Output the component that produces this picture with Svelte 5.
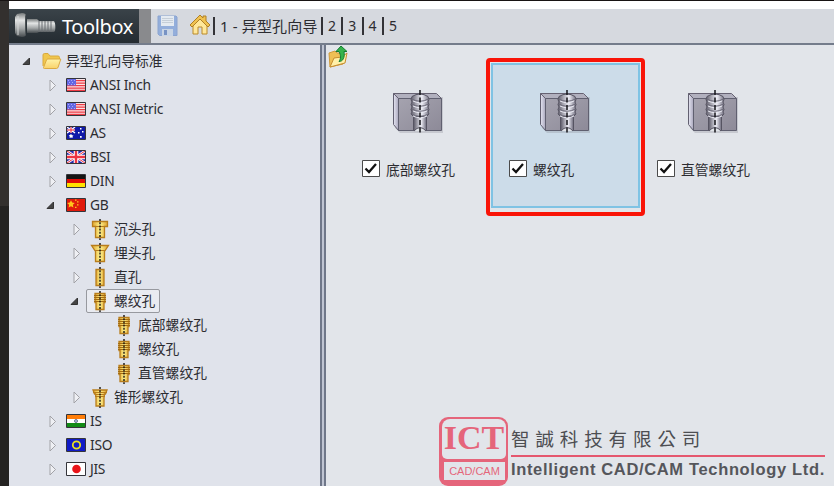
<script>
	const tabs = ['1 - 异型孔向导', '2', '3', '4', '5'];

	const tree = [
		{ label: '异型孔向导标准', icon: 'folder', level: 0, state: 'open' },
		{ label: 'ANSI Inch', icon: 'us', level: 1, state: 'closed' },
		{ label: 'ANSI Metric', icon: 'us', level: 1, state: 'closed' },
		{ label: 'AS', icon: 'au', level: 1, state: 'closed' },
		{ label: 'BSI', icon: 'gb', level: 1, state: 'closed' },
		{ label: 'DIN', icon: 'de', level: 1, state: 'closed' },
		{ label: 'GB', icon: 'cn', level: 1, state: 'open' },
		{ label: '沉头孔', icon: 'counterbore', level: 2, state: 'closed' },
		{ label: '埋头孔', icon: 'countersink', level: 2, state: 'closed' },
		{ label: '直孔', icon: 'straight', level: 2, state: 'closed' },
		{ label: '螺纹孔', icon: 'tapped', level: 2, state: 'open', selected: true },
		{ label: '底部螺纹孔', icon: 'tapped', level: 3 },
		{ label: '螺纹孔', icon: 'tapped', level: 3 },
		{ label: '直管螺纹孔', icon: 'tapped', level: 3 },
		{ label: '锥形螺纹孔', icon: 'tapered', level: 2, state: 'closed' },
		{ label: 'IS', icon: 'in', level: 1, state: 'closed' },
		{ label: 'ISO', icon: 'iso', level: 1, state: 'closed' },
		{ label: 'JIS', icon: 'jp', level: 1, state: 'closed' }
	];

	const holePaths = {
		counterbore: 'M2.5 2.5h15v5h-3v11h-9v-11h-3z',
		countersink: 'M1.5 2.5h17l-4 6v10h-9v-10z',
		straight: 'M6 2.5h8v16H6z',
		tapped: 'M5 2.5h10v9h-1v7H6v-7H5z',
		tapered: 'M3 3h14l-1.5 4h-1l-.5 4v8H6v-8l-.5-4h-1z'
	};

	let items = $state([
		{ label: '底部螺纹孔', checked: true },
		{ label: '螺纹孔', checked: true, selected: true },
		{ label: '直管螺纹孔', checked: true }
	]);
</script>

{#snippet flag(code)}
	<svg class="icon" width="20" height="16" viewBox="0 0 20 16">
		{#if code === 'us'}
			<path fill="#fbe3e6" d="M1 2h18v12H1z" />
			<path fill="#ee3b44" d="M1 3h18v1.3H1zM1 5.5h18v1.3H1zM1 8h18v1.3H1zM1 10.5h18v1.3H1zM1 12.8h18V14H1z" />
			<path fill="#6467e4" d="M1 2h9v6.5H1z" />
			<path fill="#a9abf5" d="M2 3h1v1H2zM5 3h1v1H5zM8 3h1v1H8zM3 5h1v1H3zM6 5h1v1H6zM2 7h1v1H2zM5 7h1v1H5zM8 7h1v1H8z" />
		{:else if code === 'au'}
			<path fill="#1019a8" d="M1 2h18v12H1z" />
			<path stroke="#fff" stroke-width="1.5" d="M1 2l8 6M9 2L1 8M5 2v6M1 5h8" />
			<path stroke="#ed2939" d="M1 5h8M5 2v6" />
			<path fill="#fff" d="M5 9l1 1.3 1.5.2-1 1.2.1 1.3L5 12.6l-1.4.4.1-1.4-1-1.1L4 10zM14 3h1.5v1.5H14zM12 7h1.5v1.5H12zM16 6h1.5v1.5H16zM14 11h1.7v1.7H14z" />
		{:else if code === 'gb'}
			<path fill="#252aaa" d="M1 2h18v12H1z" />
			<path stroke="#fff" stroke-width="2.6" d="M1 2l18 12M19 2L1 14" />
			<path stroke="#ed2939" d="M1 2l18 12M19 2L1 14" />
			<path stroke="#fff" stroke-width="4.6" d="M10 2v12M1 8h18" />
			<path stroke="#ee3442" stroke-width="2.4" d="M10 2v12M1 8h18" />
		{:else if code === 'de'}
			<path fill="#151515" d="M1 2h18v4H1z" />
			<path fill="#e00b05" d="M1 6h18v4H1z" />
			<path fill="#ffe100" d="M1 10h18v4H1z" />
		{:else if code === 'cn'}
			<path fill="#e01a0c" d="M1 2h18v12H1z" />
			<path fill="#ffc41c" d="M5 3.2l1.2 2.4 2.6.4-1.9 1.7.5 2.8L5 9.2l-2.4 1.3.5-2.8L1.2 6l2.6-.4zM9 2.6h1.5v1.2H9zM11 4.3h1.5v1.3H11zM11 7.3h1.5v1.3H11zM9 9.7h1.5V11H9z" />
		{:else if code === 'in'}
			<path fill="#ff7d08" d="M1 2h18v4H1z" />
			<path fill="#fff" d="M1 6h18v4H1z" />
			<path fill="#128b16" d="M1 10h18v4H1z" />
			<circle cx="10" cy="8" r="1.5" fill="#b5bfd7" stroke="#6a7794" />
		{:else if code === 'iso'}
			<path fill="#101bc6" d="M1 2h18v12H1z" />
			<circle cx="10.5" cy="8" r="3.7" fill="none" stroke="#e7df20" stroke-width="1.8" />
		{:else}
			<path fill="#fff" d="M1 2h18v12H1z" />
			<circle cx="10.5" cy="8" r="4.3" fill="#e91419" />
		{/if}
		<path fill="none" stroke="#34343a" d="M.5 1.5h19v13H.5z" />
	</svg>
{/snippet}

{#snippet treeIcon(name)}
	{#if name === 'folder'}
		<svg class="icon" width="20" height="20" viewBox="0 0 20 20">
			<path fill="#f0c64c" stroke="#d9a93c" d="M1 15V4q0-1.5 1.5-1.5H6L8 5h8q1.5 0 1.5 1.5V9" />
			<path fill="url(#paper)" stroke="#dba942" d="M1.5 16.5L4.5 9q.3-1 1.3-1h13l-2.6 8q-.5 1.500-1.700 1.500h-12q-1.200 0-1-1z" />
		</svg>
	{:else if holePaths[name]}
		<svg class="icon" width="20" height="21" viewBox="0 0 20 21">
			<path d={holePaths[name]} fill="url(#brass)" stroke="#b87d1c" stroke-width="1.3" />
			{#if name === 'tapped'}
				<path stroke="#a46c12" d="M4 4.5h12M4 6.5h12M4 8.5h12M4 10.5h12" />
			{:else if name === 'counterbore' || name === 'countersink'}
				<path stroke="#b87d1c" d="M5 7.5h10" />
			{:else if name === 'tapered'}
				<path stroke="#b87d1c" d="M3 5.5h14M5 7.5h10M5 9.5h10" />
			{/if}
			<path stroke="#17130d" stroke-width="1.4" stroke-dasharray="2 1.2" d="M10 0v21" />
		</svg>
	{:else}
		{@render flag(name)}
	{/if}
{/snippet}

{#snippet block()}
	<svg class="block" width="54" height="46" viewBox="0 0 54 46">
		<path fill="#777984" opacity=".25" d="M6 8h46v36H9l-5-5z" />
		<path fill="url(#side)" stroke="#626071" d="M2.5 4.5l5 5v32l-5-6z" />
		<path fill="#b1b0be" stroke="#666272" d="M2.5 4.5h43l5 5h-43z" />
		<path fill="url(#face)" stroke="#606070" d="M7.5 9.5h43v32h-43z" />
		<path fill="url(#bore)" d="M23 24h12v18H23z" />
		<path fill="none" stroke="#565462" d="M22.5 27v14.5M35.5 27v14.5" />
		<path fill="url(#bore)" stroke="#565462" d="M21 7.5q8-5 16 0l1 3-1 2.5 1 2.5-1 2.5 1 2.5-1 2.5 1 2-2.5 2.5h-13L20 25l1-2-1-2.5 1-2.5-1-2.5 1-2.5-1-2.5z" />
		{#each [10, 15, 20, 25] as y}
			<path d="M20.5 {y}q8.5 4.5 17 0" fill="none" stroke="#6c6a79" />
			<path d="M22 {y + 2}q7 3.5 14 0" fill="none" stroke="#e8e8f1" />
		{/each}
		<path fill="#e2e5ea" stroke="#565462" d="M23 42q6-7 12 0" />
		<path stroke="#15151a" stroke-width="1.5" stroke-dasharray="5 2.5" d="M29 1v43" />
	</svg>
{/snippet}

<svg class="defs" width="0" height="0">
	<defs>
		<linearGradient id="paper" x2="0" y2="1">
			<stop stop-color="#fff3a8" />
			<stop offset="1" stop-color="#f9d26a" />
		</linearGradient>
		<linearGradient id="brass">
			<stop stop-color="#e0a62e" />
			<stop offset=".5" stop-color="#fff18b" />
			<stop offset="1" stop-color="#dfa431" />
		</linearGradient>
		<linearGradient id="side">
			<stop stop-color="#e5e5f2" />
			<stop offset="1" stop-color="#a9a7bc" />
		</linearGradient>
		<linearGradient id="face" x2="1" y2="1">
			<stop stop-color="#a5a3af" />
			<stop offset="1" stop-color="#8d8a98" />
		</linearGradient>
		<linearGradient id="bore">
			<stop stop-color="#62606e" />
			<stop offset=".6" stop-color="#eeeef6" />
			<stop offset="1" stop-color="#777585" />
		</linearGradient>
		<linearGradient id="steel" x2="0" y2="1">
			<stop stop-color="#777b7c" />
			<stop offset=".3" stop-color="#e4e6e6" />
			<stop offset=".65" stop-color="#a3a7a8" />
			<stop offset="1" stop-color="#454a4e" />
		</linearGradient>
	</defs>
</svg>

<div class="window">
	<header>
		<div class="brand">
			<svg width="44" height="28" viewBox="0 0 44 28">
				<path fill="url(#steel)" d="M1 5l2-3 5-1q4 0 4 3v18q0 3-4 3l-5-1-2-3z" />
				<path fill="none" stroke="#d5d8d9" d="M4 4v19" />
				<path fill="#4c5255" d="M11 2l1 2v18l-1 2z" />
				<path fill="url(#steel)" d="M13 7h10l2 2h15q2 3 1 10l-1 1H25l-2 1H13z" />
				<path stroke="#6a6f72" d="M25 9v11M28 9v11M31 9v11M34 9v11M37 9v11" />
			</svg>
			<span>Toolbox</span>
		</div>
		<div class="grip"></div>
		<svg class="save" width="21" height="22" viewBox="0 0 21 22">
			<path fill="#93aedb" stroke="#8ba4d0" d="M1 1h18l1 1v18.5H2.5L1 19z" />
			<path fill="#e4eaf1" d="M4 1h13v10H4z" />
			<path stroke="#c5ced8" d="M5 3.5h11M5 5.5h11M5 7.5h11" />
			<path fill="#c9d5e5" d="M5 14h11v7H5z" />
			<path fill="#7893c4" d="M7 15h3v5H7z" />
		</svg>
		<svg class="home" width="22" height="22" viewBox="0 0 22 22">
			<path fill="#ffe79a" stroke="#b98a2a" d="M4 10v10h5v-7h4v7h5V10l-7-6z" />
			<path fill="#f0c251" stroke="#b08026" d="M1 11L11 1l3 3V2h3v5l4 4-2 2-8-8-8 8z" />
		</svg>
		<nav>
			{#each tabs as tab}
				<span>{tab}</span>
			{/each}
		</nav>
	</header>

	<main>
		<aside>
			{#each tree as node}
				<div class="row" style="padding-left: {13 + node.level * 24}px">
					<svg class="arrow" width="14" height="14" viewBox="0 0 14 14">
						{#if node.state === 'open'}
							<path fill="#444" stroke="#333" d="M7.5 4v6.5H1z" />
						{:else if node.state === 'closed'}
							<path fill="#eff0f4" stroke="#a2a2a7" d="M4 2l5.5 5.5L4 13z" />
						{/if}
					</svg>
					<div class="node" class:selected={node.selected}>
						{@render treeIcon(node.icon)}
						<span class:latin={/^[A-Z]/.test(node.label)}>{node.label}</span>
					</div>
				</div>
			{/each}
		</aside>

		<div class="splitter"></div>

		<section>
			<svg class="up" width="22" height="24" viewBox="0 0 22 24">
				<path fill="#eebf55" stroke="#cf9a3c" d="M2 8l6-2 2 2h6v11L3 22z" />
				<path fill="#fff0a8" stroke="#c58d30" d="M3 22l4-9 8-1 5-4-2 10z" />
				<path fill="#35b34b" stroke="#147c32" d="M14 1l6 5.5h-3c1 6-1 10-5 10 2-3 2-6 0-10H9z" />
			</svg>
			<div class="cards">
				{#each items as item}
					<div class="card" class:active={item.selected}>
						<div class="tile">
							{@render block()}
							<label>
								<input type="checkbox" bind:checked={item.checked} />
								<svg class="check" width="18" height="17" viewBox="0 0 18 17">
									<path fill="#fff" stroke="#4b4b4b" d="M.5.5h17v16H.5z" />
									{#if item.checked}
										<path fill="none" stroke="#111" stroke-width="2.3" d="M3.5 8.5L7 12l7-8" />
									{/if}
								</svg>
								<span>{item.label}</span>
							</label>
						</div>
					</div>
				{/each}
			</div>
			<div class="company">
				<div class="logo">
					<div class="ict">ICT</div>
					<div class="cad">CAD/CAM</div>
				</div>
				<div class="name">
					<div class="zh">智誠科技有限公司</div>
					<div class="en">Intelligent CAD/CAM Technology Ltd.</div>
				</div>
			</div>
		</section>
	</main>
</div>

<style>
	:global(body) {
		overflow: hidden;
	}
	.defs {
		position: absolute;
	}
	.window {
		box-sizing: border-box;
		width: 834px;
		height: 486px;
		padding-left: 9px;
		border-top: 1px solid #171313;
		background: linear-gradient(#33302e 205px, #242322 205px);
		color: #2c2c31;
		font: 14px 'Noto Sans', 'Noto Sans CJK SC', sans-serif;
		overflow: hidden;
	}
	header {
		display: flex;
		box-sizing: border-box;
		height: 44px;
		border-top: 8px solid #fff;
		border-bottom: 2px solid #747c8b;
		background: #d6d9df;
	}
	.brand {
		display: flex;
		align-items: center;
		box-sizing: border-box;
		width: 130px;
		padding-left: 5px;
		background: linear-gradient(#3a4349, #242b31);
		color: #fff;
		font: 20px 'Noto Sans', sans-serif;
	}
	.brand span {
		margin: 0 0 0 4px;
		letter-spacing: -0.4px;
	}
	.grip {
		width: 12px;
		background: #898a8d;
	}
	.save {
		margin: 6px 0 0 6px;
	}
	.home {
		margin: 5px 0 0 11px;
	}
	nav {
		display: flex;
		align-items: center;
		height: 34px;
		margin-left: 2px;
		white-space: nowrap;
	}
	nav span {
		box-sizing: border-box;
		width: 20.3px;
		height: 18px;
		padding-left: 5px;
		border-left: 2px solid #333337;
		line-height: 18px;
	}
	nav span:first-child {
		width: 108px;
		font-size: 15px;
		letter-spacing: 0.15px;
	}
	main {
		display: flex;
		height: 441px;
	}
	aside {
		box-sizing: border-box;
		width: 311px;
		padding-top: 4px;
		background: #e0e3eb;
	}
	.row {
		display: flex;
		align-items: center;
		height: 24px;
		white-space: nowrap;
	}
	.arrow {
		flex: none;
		margin-right: 2px;
	}
	.node {
		display: flex;
		align-items: center;
		height: 22px;
		padding: 0 4px 0 3px;
		border: 1px solid transparent;
		border-radius: 2px;
	}
	.node.selected {
		border-color: #97999f;
		background: #e9ebf1;
	}
	.node span {
		margin-left: 4px;
		font-size: 13.8px;
		line-height: 20px;
	}
	.node .latin {
		letter-spacing: -0.3px;
	}
	.icon {
		flex: none;
	}
	.splitter {
		box-sizing: border-box;
		width: 6px;
		border: solid #6f7789;
		border-width: 0 2px;
		background: #bfc4d2;
	}
	section {
		display: flex;
		flex: 1;
		flex-direction: column;
		background: #e2e5ea;
	}
	.up {
		margin-left: 1px;
	}
	.cards {
		display: flex;
		margin: -11px 0 0 15px;
	}
	.card {
		box-sizing: border-box;
		width: 147px;
		height: 158px;
		padding: 31px 0 0 21px;
	}
	.card.active {
		width: 159px;
		margin: 0 -9px 0 -2px;
		padding: 1px 1px 4px;
		border: 4px solid #f91408;
		border-radius: 4px;
	}
	.card.active .tile {
		box-sizing: border-box;
		height: 145px;
		padding: 24px 0 0 16px;
		border: 2px solid #7fc3e4;
		background: #ccdce9;
	}
	.block {
		display: block;
		margin-left: 29px;
	}
	.card label {
		display: flex;
		align-items: center;
		height: 21px;
		margin-top: 23px;
		font-size: 13.8px;
		white-space: nowrap;
	}
	.card input {
		position: absolute;
		opacity: 0;
	}
	.check {
		margin-right: 6px;
	}
	.company {
		display: flex;
		gap: 3px;
		margin: auto 0 0 113px;
	}
	.logo {
		box-sizing: border-box;
		width: 69px;
		height: 69px;
		padding: 2px 2px 3px 3px;
		border-radius: 9px;
		background: #e5657b;
	}
	.ict {
		height: 40px;
		border-radius: 8px 8px 5px 5px;
		background: #e2e5ea;
		color: #e5657b;
		font: bold 34px/38px 'Liberation Serif', serif;
		text-align: center;
	}
	.cad {
		height: 18px;
		margin: 3px 1px 0 2px;
		background: #e2e5ea;
		color: #e5657b;
		font: 11px/19px 'Liberation Sans', sans-serif;
		text-align: center;
	}
	.zh {
		height: 38px;
		border-bottom: 2px solid #e5576e;
		color: #4d4e52;
		font: 18.5px/42px 'Noto Sans CJK TC', sans-serif;
		letter-spacing: 5.9px;
	}
	.en {
		color: #55565b;
		font: bold 16.5px/25px 'Liberation Sans', sans-serif;
		letter-spacing: 0.65px;
		white-space: nowrap;
	}
</style>
